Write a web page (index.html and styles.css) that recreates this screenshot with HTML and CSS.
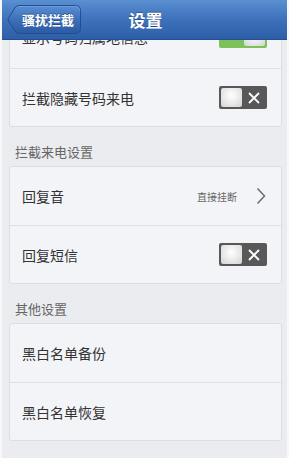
FILE: index.html
```html
<!DOCTYPE html>
<html lang="zh">
  <head>
    <meta charset="UTF-8" />
    <meta name="viewport" content="width=device-width, initial-scale=1.0" />
    <title>设置</title>
    <link rel="stylesheet" href="styles.css">
  </head>
  <body>
    <div class="phone">
      <div class="navbar">
        <div class="back">
          <svg class="back-shape" width="74" height="29" viewBox="0 0 74 29">
            <defs>
              <linearGradient id="backGrad" x1="0" y1="0" x2="0" y2="1">
                <stop offset="0" stop-color="#5a8fd3" />
                <stop offset="0.5" stop-color="#3c70b9" />
                <stop offset="1" stop-color="#2a5aa2" />
              </linearGradient>
            </defs>
            <path d="M12 0.5 H68.5 Q73.5 0.5 73.5 5.5 V23.5 Q73.5 28.5 68.5 28.5 H12 Q10 28.5 8.5 27 L1.5 16 Q0.5 14.5 1.5 13 L8.5 2 Q10 0.5 12 0.5 Z" fill="url(#backGrad)" stroke="#22508f" stroke-width="1" />
            <path d="M12 1.5 H68.5 Q72.5 1.5 72.5 5.5" fill="none" stroke="#7aa6de" stroke-width="1" opacity="0.6" />
          </svg>
          <span class="back-text">骚扰拦截</span>
        </div>
        <div class="title">设置</div>
      </div>
      <div class="main">
        <div class="list">
          <div class="card">
            <div class="row row-cut">
              <span class="label">显示号码归属地信息</span>
              <div class="toggle on"><span class="knob"></span></div>
            </div>
            <div class="row">
              <span class="label">拦截隐藏号码来电</span>
              <div class="toggle">
                <span class="knob"></span>
                <svg class="cross" width="12" height="12" viewBox="0 0 12 12">
                  <path d="M1 1 L11 11 M11 1 L1 11" stroke="#fff" stroke-width="1.8" />
                </svg>
              </div>
            </div>
          </div>

          <div class="section">拦截来电设置</div>
          <div class="card">
            <div class="row">
              <span class="label">回复音</span>
              <span class="value">直接挂断</span>
              <svg class="chevron" width="10" height="18" viewBox="0 0 10 18">
                <path d="M1.5 1.5 L8.5 9 L1.5 16.5" fill="none" stroke="#6b6b6b" stroke-width="1.5" />
              </svg>
            </div>
            <div class="row">
              <span class="label">回复短信</span>
              <div class="toggle">
                <span class="knob"></span>
                <svg class="cross" width="12" height="12" viewBox="0 0 12 12">
                  <path d="M1 1 L11 11 M11 1 L1 11" stroke="#fff" stroke-width="1.8" />
                </svg>
              </div>
            </div>
          </div>

          <div class="section">其他设置</div>
          <div class="card">
            <div class="row">
              <span class="label">黑白名单备份</span>
            </div>
            <div class="row">
              <span class="label">黑白名单恢复</span>
            </div>
          </div>
        </div>
      </div>
    </div>
  </body>
</html>
```

FILE: styles.css
```css
body {
  margin: 0;
  font-family: "Noto Sans CJK SC", "Noto Sans", sans-serif;
  background: #ffffff;
}
.phone {
  width: 289px;
  height: 458px;
  overflow: hidden;
  background: #ebecf0;
  border-left: 2px solid #f8f8fa;
  border-right: 2px solid #f8f8fa;
  box-sizing: border-box;
}
.navbar {
  position: relative;
  z-index: 2;
  height: 39px;
  background: linear-gradient(#5b8fd2, #3d71ba 50%, #2d5fa8);
  border-bottom: 1px solid #234f92;
  display: flex;
  align-items: center;
  justify-content: center;
}
.back {
  position: absolute;
  left: 5px;
  top: 5px;
  width: 74px;
  height: 29px;
  display: flex;
  align-items: center;
}
.back-shape {
  position: absolute;
  left: 0;
  top: 0;
}
.back-text {
  position: relative;
  margin-left: 15px;
  color: #fff;
  font-size: 13px;
  font-weight: bold;
  text-shadow: 0 -1px 0 rgba(0, 0, 0, 0.3);
}
.title {
  color: #fff;
  font-size: 17px;
  font-weight: bold;
  margin-left: 2px;
  text-shadow: 0 -1px 0 rgba(0, 0, 0, 0.3);
}
.main {
  height: 418px;
  overflow: hidden;
}
.list {
  margin-top: -31px;
  padding: 0 5px 0 7px;
}
.card {
  background: #f3f4f8;
  border: 1px solid #dcdde2;
  border-radius: 3px;
}
.row {
  height: 58px;
  box-sizing: border-box;
  display: flex;
  align-items: center;
  padding: 0 14px 0 12px;
  border-top: 1px solid #dfe0e4;
}
.row:first-child {
  border-top: none;
}
.row-cut {
  padding-bottom: 5px;
}
.label {
  flex: 1;
  font-size: 14px;
  color: #333;
}
.value {
  font-size: 10px;
  color: #666;
  margin-right: 19px;
}
.chevron {
  margin-right: 1px;
}
.section {
  height: 39px;
  box-sizing: border-box;
  display: flex;
  align-items: flex-end;
  padding: 0 0 5px 6px;
  font-size: 13px;
  color: #666;
}
.toggle {
  width: 48px;
  height: 23px;
  background: #585858;
  border-radius: 2px;
  display: flex;
  align-items: center;
  padding: 0 2px;
  box-sizing: border-box;
}
.toggle .knob {
  width: 21px;
  height: 19px;
  border-radius: 2px;
  background: radial-gradient(circle at 50% 40%, #ffffff, #e6e6e6 60%, #d2d2d2);
}
.toggle .cross {
  margin-left: 6px;
}
.toggle.on {
  background: #7cc15a;
  justify-content: flex-end;
}
```
